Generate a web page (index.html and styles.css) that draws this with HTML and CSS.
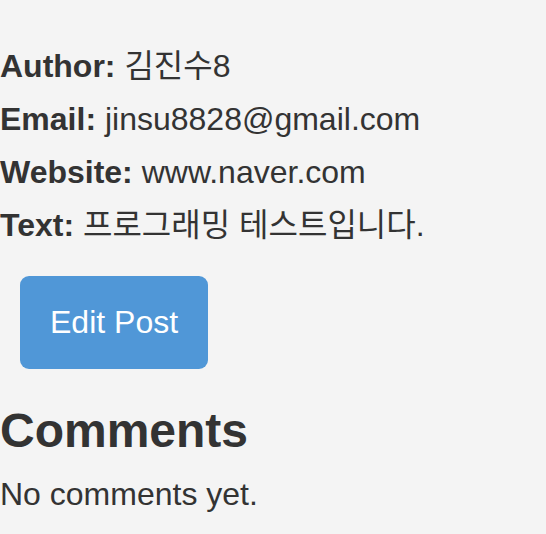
FILE: index.html
```html
<!DOCTYPE html>
<html lang="ko">
<head>
<meta charset="utf-8">
<title>Post</title>
<link rel="stylesheet" href="styles.css">
</head>
<body>
<div class="post">
  <p class="field"><strong>Author:</strong> <span class="ko">김진수</span>8</p>
  <p class="field"><strong>Email:</strong> jinsu8828@gmail.com</p>
  <p class="field"><strong>Website:</strong> www.naver.com</p>
  <p class="field"><strong>Text:</strong> <span class="ko">프로그래밍 테스트입니다.</span></p>
  <div class="actions">
    <a class="btn" href="#">Edit Post</a>
  </div>
  <h2 class="comments-title">Comments</h2>
  <p class="empty">No comments yet.</p>
</div>
</body>
</html>
```
FILE: styles.css
```css
html, body {
  margin: 0;
  padding: 0;
  background: #f4f4f4;
}
body {
  font-family: "Liberation Sans", Arial, "Noto Sans CJK KR", sans-serif;
  font-size: 32px;
  color: #333333;
}
.post {
  padding-top: 32px;
}
.field {
  margin: 16px 0;
  line-height: 37px;
}
.field strong {
  font-weight: bold;
}
.ko {
  line-height: 28px;
}
.actions {
  margin: 32px 0 0 20px;
  display: flex;
}
.btn {
  display: inline-block;
  background: #5097d7;
  color: #ffffff;
  text-decoration: none;
  padding: 28px 30px;
  line-height: 37px;
  border-radius: 9px;
  font-size: 32px;
}
.comments-title {
  font-size: 48px;
  font-weight: bold;
  line-height: 55px;
  margin: 34px 0 18px;
}
.empty {
  margin: 0;
  line-height: 37px;
}
```
